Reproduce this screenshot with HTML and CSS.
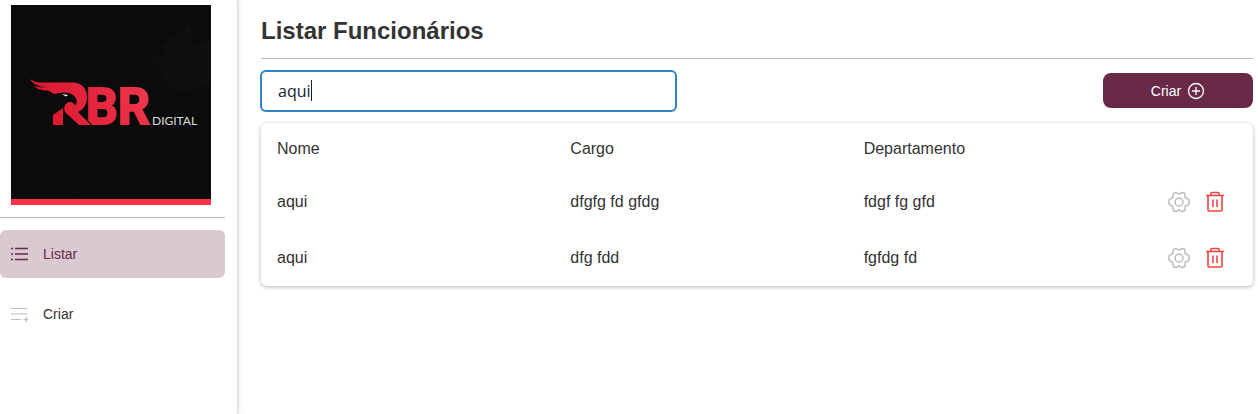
FILE: index.html
```html
<!DOCTYPE html>
<html lang="pt-BR">
<head>
<meta charset="utf-8">
<title>Listar Funcionários</title>
<link rel="stylesheet" href="styles.css">
</head>
<body>
<div class="layout">
  <aside class="sidebar">
    <svg class="logo" viewBox="0 0 200 200" role="img" aria-label="RBR Digital">
      <defs>
        <linearGradient id="red" gradientUnits="userSpaceOnUse" x1="20" y1="115" x2="136" y2="80">
          <stop offset="0" stop-color="#d9142c"/><stop offset="1" stop-color="#ee364c"/>
        </linearGradient>
      </defs>
      <rect width="200" height="200" fill="#0b0b0b"/>
      <path fill="#0f0f0f" d="M138 58c2-6 9-9 16-8l-2-10 28-21 1 23 19-8v44l-20 8-22-2-9-22z"/>
      <path fill="none" stroke="#111" d="M2 172q14-10 8 0t18 2 14 8 26 4"/>
      <text class="logo-letters" x="75" y="119" fill="url(#red)" stroke="url(#red)">BR</text>
      <path fill="url(#red)" stroke="#0b0b0b" stroke-width="2" paint-order="stroke" d="M19 74C23 77 27 77.500 33 77.500H62C71 77.500 76 84 76 92C76 99 73 104 67 107L80 120H68L55 108C52 105 53 99 57 97.500C60 96.500 62 97 64 100.500C67 98 66 93 62 90C58 87 53 87 48 88L43 89L37 85.500C30 85.500 26 84 23 81C28 82.500 31 82.500 35 82C27 81.500 21 79 19 74Z"/>
      <path fill="url(#red)" d="M42 110l10-7v17H42z"/>
      <path fill="#fff" d="M51 89l6 1-2 1.500z"/>
      <text class="logo-sub" x="141" y="120">DIGITAL</text>
      <rect y="194" width="200" height="6" fill="#ff3347"/>
    </svg>
    <nav class="menu">
      <a class="menu-item active" href="#listar">
        <svg class="menu-icon" viewBox="0 0 20 20" fill="none" stroke="currentColor" stroke-width="1.3"><path d="M5 4.500h13M5 10h13M5 15.500h13M1 4.500h2M1 10h2M1 15.500h2"/></svg>
        Listar
      </a>
      <a class="menu-item" href="#criar">
        <svg class="menu-icon muted" viewBox="0 0 20 20" fill="none" stroke="currentColor" stroke-width="1.2"><path d="M1 4.500h16.500M1 10h16.500M1 15.500h10M13.500 15.500h5M16 13v5"/></svg>
        Criar
      </a>
    </nav>
  </aside>
  <main class="content">
    <h1 class="title">Listar Funcionários</h1>
    <div class="toolbar">
      <div class="search-box">
        <input class="search" type="text" value="aqui" aria-label="Buscar funcionário">
        <span class="caret"></span>
      </div>
      <button class="create" type="button">Criar
        <svg class="create-icon" viewBox="0 0 18 18" fill="none" stroke="currentColor" stroke-width="1.300"><circle cx="9" cy="9" r="7.500"/><path d="M5 9h8M9 5v8"/></svg>
      </button>
    </div>
    <div class="card">
      <table class="table">
        <thead><tr><th>Nome</th><th>Cargo</th><th>Departamento</th><th class="actions-head" aria-label="Ações"></th></tr></thead>
        <tbody>
          <tr><td>aqui</td><td>dfgfg fd gfdg</td><td>fdgf fg gfd</td><td><div class="actions">
            <button class="icon-button gear" type="button" aria-label="Editar"><svg viewBox="0 0 22 22"><use href="#gear"/></svg></button>
            <button class="icon-button trash" type="button" aria-label="Excluir"><svg viewBox="0 0 22 22"><use href="#trash"/></svg></button></div></td></tr>
          <tr><td>aqui</td><td>dfg fdd</td><td>fgfdg fd</td><td><div class="actions">
            <button class="icon-button gear" type="button" aria-label="Editar"><svg viewBox="0 0 22 22"><use href="#gear"/></svg></button>
            <button class="icon-button trash" type="button" aria-label="Excluir"><svg viewBox="0 0 22 22"><use href="#trash"/></svg></button></div></td></tr>
        </tbody>
      </table>
    </div>
  </main>
</div>
<svg class="symbols" aria-hidden="true">
  <symbol id="gear" viewBox="0 0 22 22"><g fill="none" stroke="currentColor" stroke-width="1.500" stroke-linejoin="round"><circle cx="11" cy="11" r="4"/><path d="M11 3C12.500 3 12.800 1.500 14 1.500C15.300 1.500 16.700 2.300 17 3.500C17.300 4.700 16.500 5.500 17.300 6.700C18 7.800 20 7 20.600 8.500C21.200 10 21.200 12 20.600 13.500C20 15 18 14.200 17.300 15.300C16.500 16.500 17.300 17.300 17 18.500C16.700 19.700 15.300 20.500 14 20.500C12.800 20.500 12.500 19 11 19C9.500 19 9.200 20.500 8 20.500C6.700 20.500 5.300 19.700 5 18.500C4.700 17.300 5.500 16.500 4.700 15.300C4 14.200 2 15 1.400 13.500C.8 12 .8 10 1.400 8.500C2 7 4 7.800 4.700 6.700C5.500 5.500 4.700 4.700 5 3.500C5.300 2.300 6.700 1.500 8 1.500C9.200 1.500 9.500 3 11 3Z"/></g></symbol>
  <symbol id="trash" viewBox="0 0 22 22"><g fill="none" stroke="currentColor" stroke-width="1.600" stroke-linejoin="round"><path d="M2 4.500H20M4 4.500V19Q4 20 5 20H17Q18 20 18 19V4.500M7 4.500V2.500Q7 1.500 8 1.500H14Q15 1.500 15 2.500V4.500M9 8.500V16M13 8.500V16"/></g></symbol>
</svg>
</body>
</html>
```
FILE: styles.css
```css
* { box-sizing: border-box; }
body { margin: 0; color: #333; background: #fff; font: 16px/24px "Liberation Sans", Arial, sans-serif; }
.layout { display: flex; min-height: 100vh; }
.sidebar { flex: 0 0 238px; padding: 5px 12px 0 0; border-right: 1px solid #ddd; box-shadow: 1px 0 3px rgba(0, 0, 0, .12); }
.logo { display: block; width: 200px; height: 200px; margin-left: 11px; }
.logo-letters { font: bold 50px Roboto, sans-serif; stroke-width: 2px; }
.logo-sub { font: 12px Lato, sans-serif; fill: #ddd; }
.menu { display: flex; flex-direction: column; gap: 12px; margin-top: 12px; padding-top: 12px; border-top: 1px solid #bbb; }
.menu-item { display: flex; align-items: center; gap: 13px; height: 48px; padding-left: 10px; border-radius: 6px; color: #333; font-size: 14px; text-decoration: none; }
.menu-item.active { color: #682a46; background: #d9cad1; }
.menu-icon { width: 20px; height: 20px; }
.muted { color: #bbb; }
.content { flex: 1; min-width: 0; padding: 13px 5px 24px 23px; }
.title { margin: 0; padding-bottom: 9px; border-bottom: 1px solid #bbb; font-size: 24px; line-height: 36px; }
.toolbar { display: flex; align-items: center; justify-content: space-between; margin: 11px 0; }
.search-box { position: relative; flex: 0 0 42%; margin-left: -1px; }
.search { display: block; width: 100%; height: 42px; padding: 0 16px; border: 2px solid #3182ce; border-radius: 6px; outline: 0; color: #1a202c; background: #fff; font: 16px "Open Sans", "Noto Sans", sans-serif; }
.caret { position: absolute; top: 10px; left: 51px; width: 1px; height: 21px; background: #1a202c; }
.create { display: flex; align-items: center; justify-content: center; gap: 6px; width: 150px; height: 35px; margin-bottom: 1px; padding: 0; border: 0; border-radius: 8px; color: #fff; background: #682a46; font: 14px "Liberation Sans", Arial, sans-serif; }
.create-icon { width: 18px; height: 18px; }
.card { border-radius: 6px; box-shadow: 0 1px 4px rgba(0, 0, 0, .3); }
.table { width: 100%; border-collapse: collapse; table-layout: fixed; }
.table th, .table td { height: 56px; padding: 0 16px; text-align: left; font-weight: normal; }
.table th { height: 51px; }
.table .actions-head { width: 112px; }
.actions { display: flex; justify-content: flex-end; gap: 14px; padding-right: 11px; }
.icon-button { width: 22px; height: 22px; padding: 0; border: 0; background: none; }
.icon-button svg { display: block; width: 22px; height: 22px; }
.gear { color: #bbb; }
.trash { color: #f2443f; }
.symbols { display: none; }
```
